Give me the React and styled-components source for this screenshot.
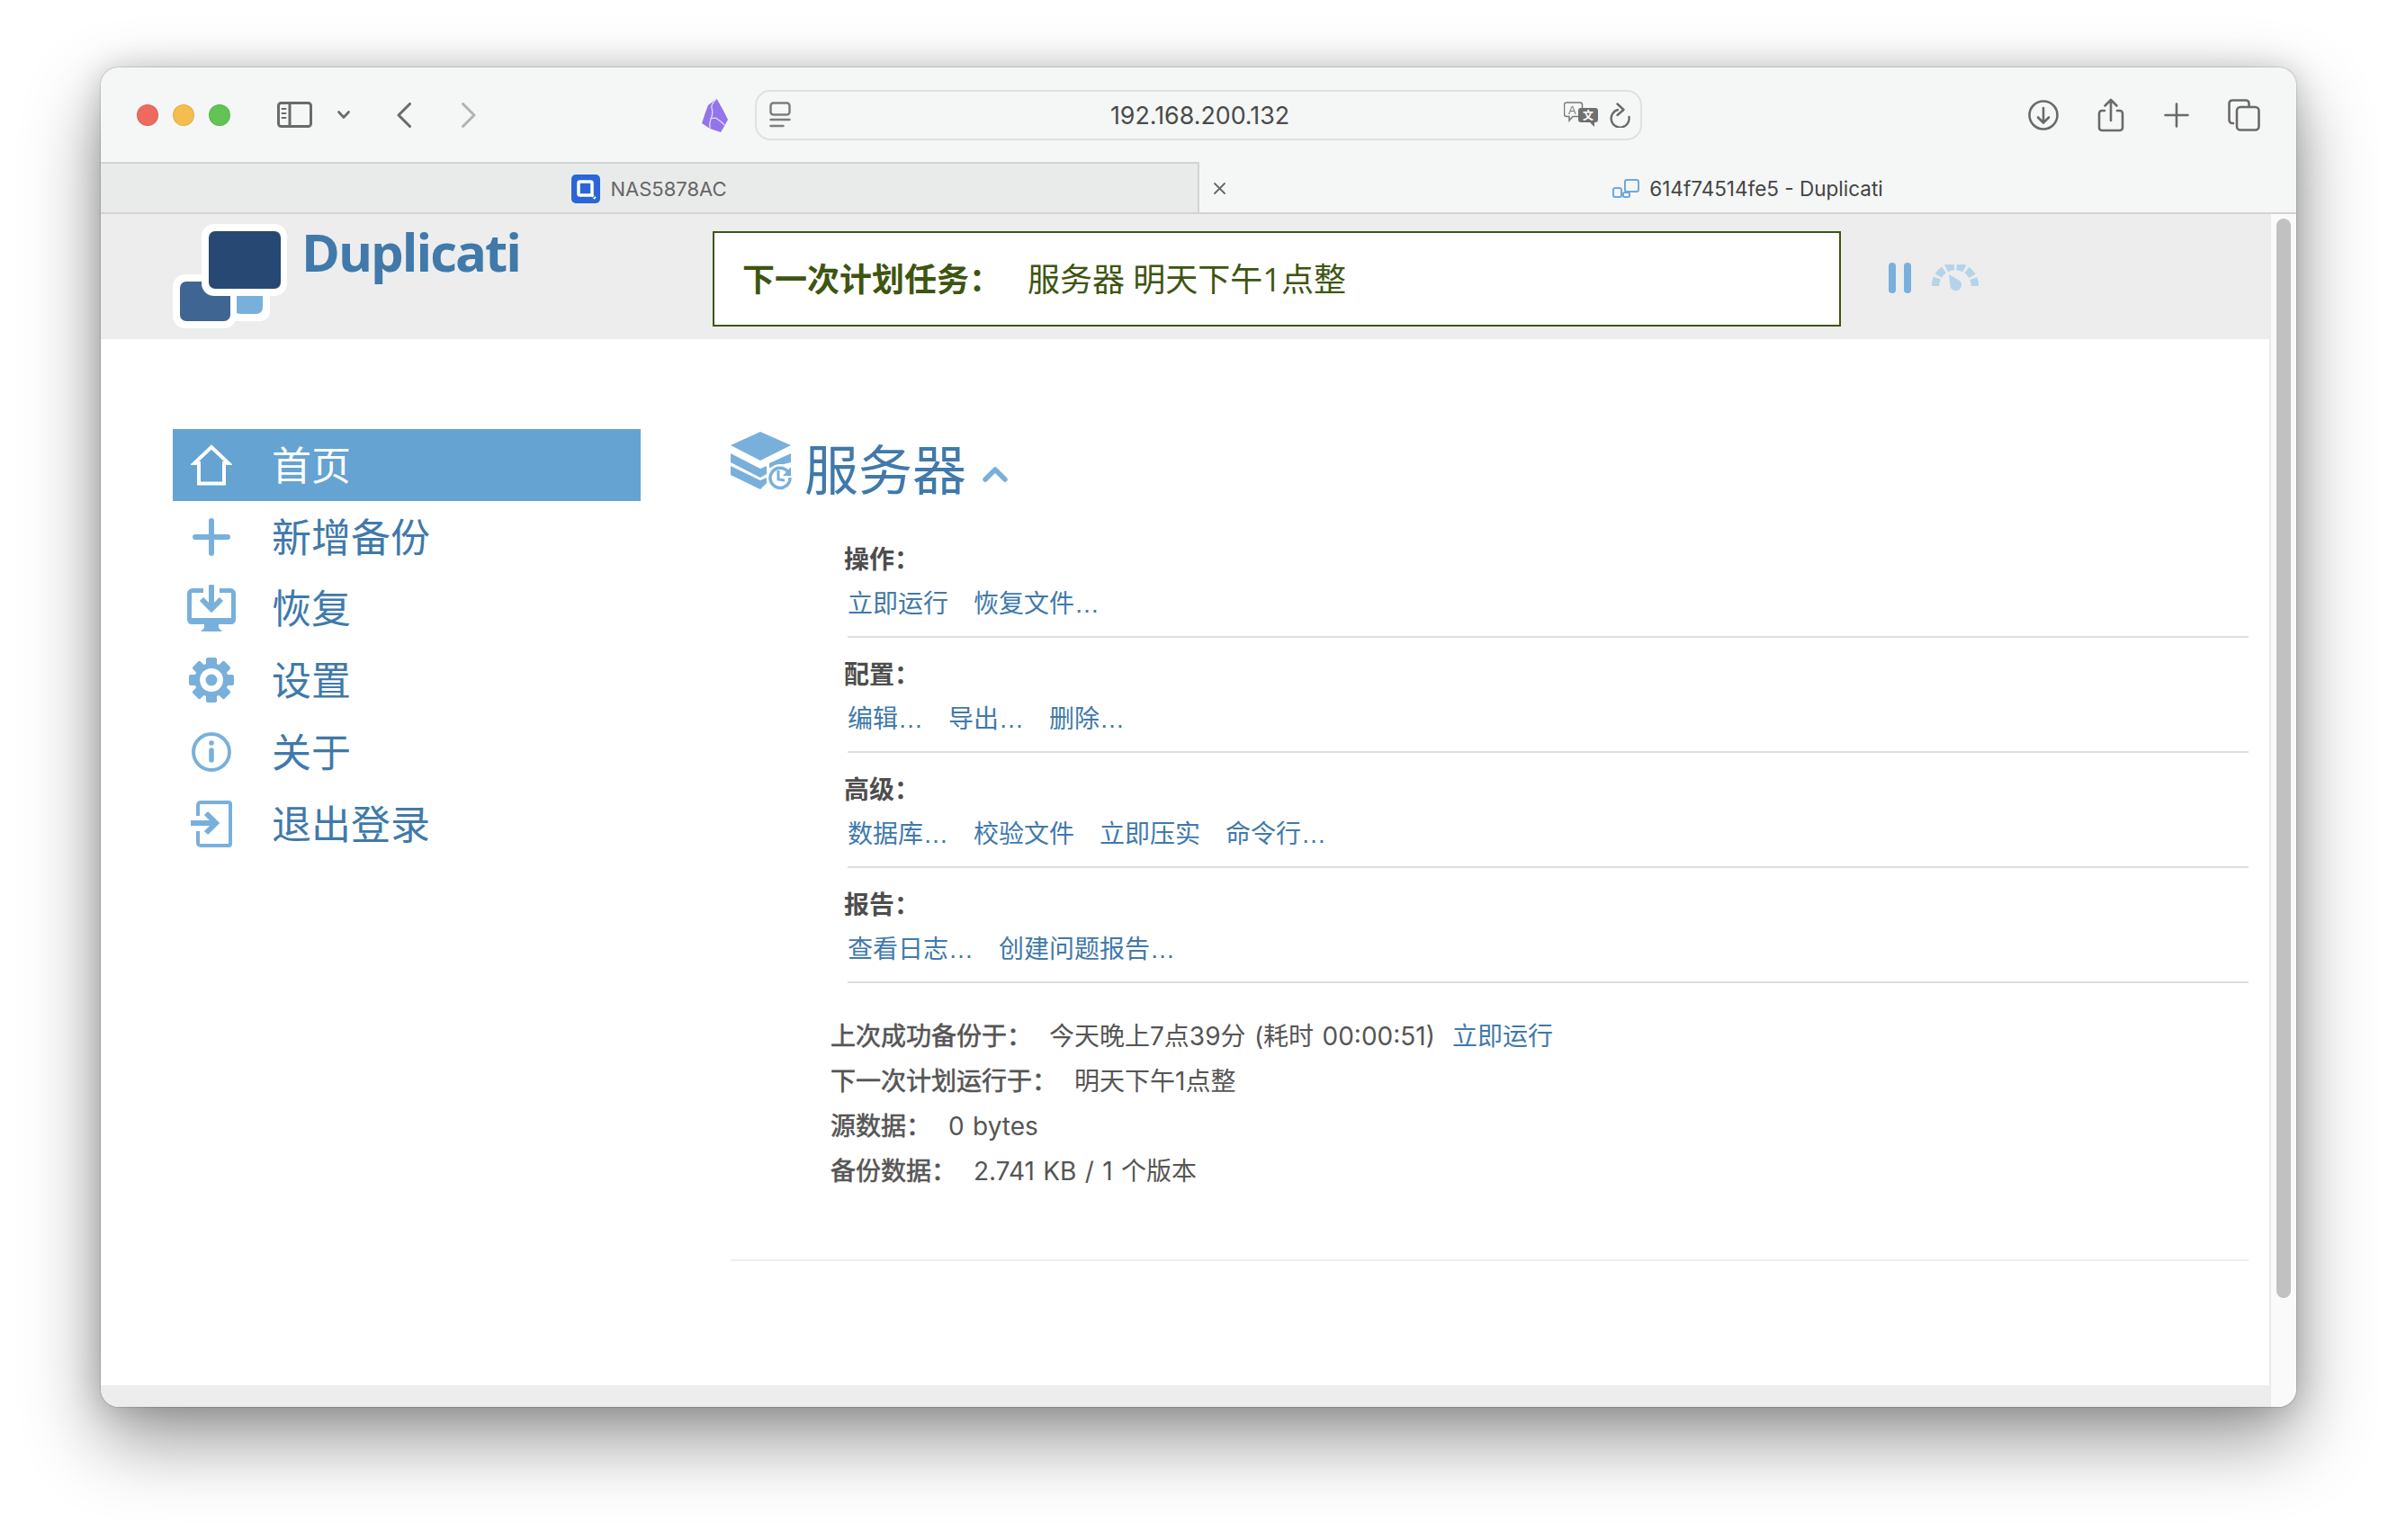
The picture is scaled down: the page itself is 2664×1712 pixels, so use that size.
import React from 'react';
import styled, { createGlobalStyle } from 'styled-components';

const FONT = `"Inter", "Noto Sans CJK SC", sans-serif`;

const GlobalStyle = createGlobalStyle`
    html, body {
        margin: 0;
        padding: 0;
        background: #fff;
    }
    svg {
        display: block;
    }
`;

const Page = styled.div`
    width: 2664px;
    height: 1712px;
    padding: 75px 112px 148px;
    box-sizing: border-box;
    overflow: hidden;
    font-family: ${FONT};
`;

const Win = styled.div`
    height: 100%;
    display: flex;
    flex-direction: column;
    border-radius: 20px;
    overflow: hidden;
    background: #fff;
    box-shadow: 0 0 1.5px rgba(0, 0, 0, 0.55), 0 0 34px rgba(0, 0, 0, 0.17), 0 36px 84px rgba(0, 0, 0, 0.42);
`;

const Toolbar = styled.div`
    height: 105px;
    flex: none;
    display: flex;
    align-items: center;
    padding-left: 40px;
    background: #f5f7f6;
`;

const Light = styled.span`
    width: 24px;
    height: 24px;
    border-radius: 50%;
    background: ${p => p.$color};
    box-shadow: inset 0 0 0 1px rgba(0, 0, 0, 0.08);
    margin-left: ${p => p.$gap || 0}px;
`;

const Slot = styled.span`
    flex: none;
    margin-left: ${p => p.$gap || 0}px;
`;

const UrlBar = styled.div`
    width: 986px;
    height: 56px;
    box-sizing: border-box;
    margin-left: 30px;
    padding: 0 11px 0 14px;
    display: flex;
    align-items: center;
    border: 2px solid #dfe1e0;
    border-radius: 17px;
`;

const UrlText = styled.div`
    flex: 1;
    padding-left: 50px;
    text-align: center;
    font-size: 26.8px;
    color: #4a4a4a;
`;

const TabBar = styled.div`
    height: 58px;
    flex: none;
    display: flex;
    background: #f5f7f6;
    border-bottom: 2px solid #d2d3d3;
    box-sizing: border-box;
`;

const Tab = styled.div`
    position: relative;
    flex: 1;
    display: flex;
    align-items: center;
    justify-content: center;
    gap: 11px;
    padding-top: 2px;
    box-sizing: border-box;
    font-size: ${p => (p.$active ? 22.5 : 22)}px;
    color: ${p => (p.$active ? '#444' : '#666')};
    background: ${p => (p.$active ? '#f5f7f6' : '#e9ebea')};
    ${p => !p.$active && `
        border-top: 2px solid #d2d3d3;
        border-right: 2px solid #d2d3d3;
    `}
`;

const TabClose = styled.span`
    position: absolute;
    left: 15px;
    top: 22px;
`;

const Body = styled.div`
    flex: 1;
    display: flex;
    min-height: 0;
`;

const Content = styled.div`
    flex: 1;
    display: flex;
    flex-direction: column;
    min-width: 0;
`;

const Track = styled.div`
    width: 30px;
    flex: none;
    box-sizing: border-box;
    padding: 5px 6px 0 6px;
    background: #fafafa;
    border-left: 2px solid #ececec;
`;

const Thumb = styled.div`
    width: 16px;
    height: 1200px;
    border-radius: 8px;
    background: #c1c1c1;
`;

const Header = styled.div`
    height: 139px;
    flex: none;
    display: flex;
    align-items: flex-start;
    background: #ededed;
`;

const Brand = styled.div`
    width: 600px;
    margin-left: 80px;
    padding-top: 11px;
    display: flex;
    gap: 15px;
`;

const BrandName = styled.div`
    font-family: "Open Sans", sans-serif;
    font-weight: 700;
    font-size: 58px;
    line-height: 58px;
    letter-spacing: -2px;
    margin-top: 2px;
    color: #4079aa;
`;

const Banner = styled.div`
    width: 1254px;
    height: 106px;
    margin-top: 19px;
    box-sizing: border-box;
    padding: 0 0 4px 31px;
    display: flex;
    align-items: center;
    background: #fff;
    border: 2px solid #3e5510;
    font-family: "Open Sans", "Noto Sans CJK SC", sans-serif;
    font-size: 36px;
    color: #3e5510;
`;

const BannerLabel = styled.span`
    font-weight: 700;
    margin-right: 29px;
`;

const HeaderIcons = styled.div`
    display: flex;
    align-items: center;
    margin: 54px 0 0 53px;
    gap: 23px;
`;

const Main = styled.div`
    flex: 1;
    display: flex;
    min-height: 0;
`;

const Side = styled.nav`
    width: 520px;
    margin: 100px 0 0 80px;
    flex: none;
`;

const SideRow = styled.div`
    height: 79.8px;
    display: flex;
    align-items: center;
    font-size: 44px;
    color: ${p => (p.$active ? '#fff' : '#4079aa')};
    background: ${p => (p.$active ? '#64a3d2' : 'transparent')};
`;

const SideIcon = styled.span`
    width: 86px;
    display: flex;
    justify-content: center;
    flex: none;
    margin-right: 24px;
`;

const SideLabel = styled.span`
    position: relative;
    top: -2px;
`;

const Column = styled.div`
    width: 1687px;
    margin-left: 100px;
    padding-top: 103px;
    flex: none;
`;

const Title = styled.div`
    display: flex;
    height: 63px;
    margin-bottom: 58px;
`;

const TitleText = styled.h1`
    margin: 10px 0 0 14px;
    font-weight: 400;
    font-size: 60px;
    line-height: 66px;
    color: #4079aa;
`;

const TitleChevron = styled.span`
    margin: 38px 0 0 18px;
`;

const Section = styled.section`
    margin-left: 130px;
    padding: 1px 0 15px;
    margin-bottom: 20px;
    border-bottom: 2px solid #ddd;
`;

const SectionLabel = styled.div`
    height: 40px;
    line-height: 40px;
    margin-left: -4px;
    font-size: 28px;
    font-weight: 700;
    color: #4d4d4d;
`;

const LinkRow = styled.div`
    display: flex;
    gap: 28px;
    margin-top: 10px;
    height: 40px;
    line-height: 40px;
`;

const Action = styled.a`
    font-family: "Liberation Sans", "Noto Sans CJK SC", sans-serif;
    font-size: 28px;
    color: #4079aa;
`;

const Stats = styled.div`
    margin: 34px 0 0 111px;
`;

const StatRow = styled.div`
    height: 50px;
    line-height: 50px;
    font-size: 28px;
    word-spacing: 1.5px;
    color: #555;
`;

const StatLabel = styled.span`
    -webkit-text-stroke: 0.6px #555;
    margin-right: 19px;
`;

const StatLink = styled.a`
    margin-left: 19px;
    color: #4079aa;
`;

const Closer = styled.hr`
    margin: 73px 0 0;
    border: 0;
    border-top: 2px solid #eee;
`;

const Footer = styled.div`
    height: 24px;
    flex: none;
    background: #ededed;
`;

const TOOL = '#6a6a6a';
const LIGHT = '#79b0db';

const Line = ({ w, h, children, color = TOOL, sw = 3 }) => (
    <svg width={w} height={h} viewBox={`0 0 ${w} ${h}`} fill="none" stroke={color} strokeWidth={sw} strokeLinecap="round" strokeLinejoin="round">
        {children}
    </svg>
);

const SidebarGlyph = () => (
    <Line w={39} h={29}>
        <rect x="1.5" y="1.5" width="36" height="26" rx="3" />
        <path d="M14 1.5v26" />
        <path d="M5.5 8h4M5.5 13h4M5.5 18h4" strokeWidth="2" />
    </Line>
);

const Obsidian = () => (
    <svg width="30" height="38" viewBox="0 0 30 38">
        <path d="M17.500 0.500 L25 14 L30 24 L25 33 L22 38 L10 34 L1 28 L5 16 L8 8 Z" fill="#9474ea" strokeLinejoin="round" />
        <path d="M17.500 0.500 Q11 7 12 11 Q14 17 11 23 Q9 29 10 34 M11 23 Q17 21 19 24 Q24 27 26 30" stroke="#e4dcfb" strokeWidth="1.300" fill="none" />
    </svg>
);

const ReaderGlyph = () => (
    <Line w={24} h={29} color="#7d7d7d" sw={2.500}>
        <rect x="1.500" y="1.500" width="21" height="13" rx="3" />
        <path d="M1.500 20h21M1.500 27h14" />
    </Line>
);

const TranslateGlyph = () => (
    <svg width="39" height="29" viewBox="0 0 39 29">
        <path d="M3 1h15a2.500 2.500 0 0 1 2.500 2.500v10.500a2.500 2.500 0 0 1-2.500 2.500H10l-4 4.500v-4.500H3a2.500 2.500 0 0 1-2.500-2.500V3.500A2.500 2.500 0 0 1 3 1z" fill="#f5f7f6" stroke="#777" strokeWidth="1.500" />
        <text x="5" y="13.500" fontFamily="Liberation Sans" fontSize="13" fill="#777">A</text>
        <path d="M19 7h16a3 3 0 0 1 3 3v10a3 3 0 0 1-3 3h-1v5l-5-5H19a3 3 0 0 1-3-3V10a3 3 0 0 1 3-3z" fill="#6f6f6f" />
        <text x="21" y="20" fontFamily="Noto Sans CJK SC" fontWeight="700" fontSize="12" fill="#fff">文</text>
    </svg>
);

const ReloadGlyph = () => (
    <Line w={23} h={28} sw={2.400}>
        <path d="M9 8A10 10 0 1 0 21.500 16" />
        <path d="M8.500 1.500l7 6.500-7 6" />
    </Line>
);

const DownloadGlyph = () => (
    <Line w={34} h={34} sw={2.600}>
        <circle cx="17" cy="17" r="15.500" />
        <path d="M17 9v16M11 19.500l6 6 6-6" />
    </Line>
);

const ShareGlyph = () => (
    <Line w={30} h={38} sw={2.600}>
        <path d="M8 14H5a3 3 0 0 0-3 3v16a3 3 0 0 0 3 3h20a3 3 0 0 0 3-3V17a3 3 0 0 0-3-3h-3" />
        <path d="M15 25V2M8.500 8.500L15 2l6.500 6.500" />
    </Line>
);

const PlusGlyph = () => (
    <Line w={28} h={28} sw={2.600}>
        <path d="M14 1.500v25M1.500 14h25" />
    </Line>
);

const TabsGlyph = () => (
    <Line w={36} h={36} sw={2.600}>
        <path d="M6 27H5a3.500 3.500 0 0 1-3.500-3.500V5A3.500 3.500 0 0 1 5 1.500h15A3.500 3.500 0 0 1 23.500 5v3" />
        <rect x="10" y="9" width="24.500" height="25.500" rx="4" />
    </Line>
);

const QnapIcon = () => (
    <svg width="32" height="32" viewBox="0 0 32 32">
        <rect width="32" height="32" rx="5" fill="#2a66d6" />
        <rect x="8" y="8" width="15" height="15" rx="1.500" fill="none" stroke="#fff" strokeWidth="3.500" />
        <path d="M21 21l6 6" stroke="#fff" strokeWidth="3" strokeDasharray="2 1" />
    </svg>
);

const DupTabIcon = () => (
    <Line w={30} h={21} color="#6fa9d8" sw={2}>
        <rect x="14" y="1" width="15" height="13" rx="2" />
        <rect x="1" y="10" width="9" height="10" rx="2" />
        <rect x="12" y="15" width="7" height="5" rx="1.500" />
    </Line>
);

const Logo = () => (
    <svg width="128" height="116" viewBox="0 0 128 116">
        <rect x="60" y="60" width="48" height="48" rx="10" fill="#fff" />
        <rect x="68" y="60" width="32" height="40" rx="7" fill="#79b0db" />
        <rect y="56" width="71" height="60" rx="14" fill="#fff" />
        <rect x="8" y="64" width="56" height="44" rx="7" fill="#3f6592" />
        <rect x="32" width="95" height="80" rx="14" fill="#fff" />
        <rect x="40" y="8" width="80" height="64" rx="7" fill="#274872" />
    </svg>
);

const PauseIcon = () => (
    <svg width="25" height="34" viewBox="0 0 25 34" fill={LIGHT}>
        <rect width="8" height="34" rx="4" />
        <rect x="17" width="8" height="34" rx="4" />
    </svg>
);

const GaugeIcon = () => (
    <svg width="52" height="30" viewBox="0 0 52 30">
        <path d="M4 24A22 22 0 0 1 48 24" fill="none" stroke="#b5d4ea" strokeWidth="8.500" strokeDasharray="9.100 2.900" />
        <path d="M19 11L31 18A6.500 6.500 0 1 1 20.500 25Z" fill="#b5d4ea" />
    </svg>
);

const HomeIcon = () => (
    <svg width="46" height="46" viewBox="0 0 46 46" fill="none" stroke="#fff" strokeWidth="4">
        <path d="M23 3L42 21H37V43.500H9V21H4Z" />
    </svg>
);

const AddIcon = () => (
    <svg width="42" height="42" viewBox="0 0 42 42" stroke={LIGHT} strokeWidth="6" strokeLinecap="round">
        <path d="M21 3v36M3 21h36" />
    </svg>
);

const RestoreIcon = () => (
    <svg width="54" height="52" viewBox="0 0 54 52" fill="none">
        <path d="M18 6.500H6a3.500 3.500 0 0 0-3.500 3.500v29a2 2 0 0 0 2 2h45a2 2 0 0 0 2-2V10A3.500 3.500 0 0 0 48 6.500H36" stroke={LIGHT} strokeWidth="5" />
        <path d="M1 37h52v3a4 4 0 0 1-4 4H5a4 4 0 0 1-4-4zM19 44h16v4l4 4H15l4-4z" fill={LIGHT} />
        <path d="M27 2v20" stroke={LIGHT} strokeWidth="6" strokeLinecap="round" />
        <path d="M16 16l11 11 11-11" stroke={LIGHT} strokeWidth="6" />
    </svg>
);

const GearIcon = () => (
    <svg width="50" height="50" viewBox="0 0 50 50">
        {[0, 45, 90, 135].map(a => (
            <rect key={a} x="19" y="0" width="12" height="50" rx="2" fill={LIGHT} transform={`rotate(${a} 25 25)`} />
        ))}
        <circle cx="25" cy="25" r="19" fill={LIGHT} />
        <circle cx="25" cy="25" r="13" fill="#fff" />
        <circle cx="25" cy="25" r="6.500" fill={LIGHT} />
    </svg>
);

const InfoIcon = () => (
    <svg width="44" height="44" viewBox="0 0 44 44" fill="none" stroke={LIGHT}>
        <circle cx="22" cy="22" r="20" strokeWidth="4" />
        <circle cx="22" cy="12" r="2.800" fill={LIGHT} stroke="none" />
        <path d="M22 20v11" strokeWidth="5.500" strokeLinecap="round" />
    </svg>
);

const LoginIcon = () => (
    <svg width="46" height="52" viewBox="0 0 46 52" fill="none">
        <path d="M8 17V5a3 3 0 0 1 3-3h31a2 2 0 0 1 2 2v44a2 2 0 0 1-2 2H11a3 3 0 0 1-3-3V34" stroke={LIGHT} strokeWidth="4" />
        <path d="M0 25h26" stroke={LIGHT} strokeWidth="6" />
        <path d="M17 14l11 11-11 11" stroke={LIGHT} strokeWidth="6" />
    </svg>
);

const ServerIcon = () => (
    <svg width="68" height="65" viewBox="0 0 68 65">
        <path d="M0 15L33 0l34 15-34 17z" fill={LIGHT} />
        <path d="M0 24l33 17 7-3v9l-7 4L0 34z" fill={LIGHT} />
        <path d="M0 38l33 16 7-3v6l-7 7L0 48z" fill={LIGHT} />
        <path d="M43 35l24-11v10l-24 6z" fill={LIGHT} />
        <circle cx="55" cy="51" r="15" fill="#fff" />
        <path d="M64 45A11 11 0 1 0 66 51" fill="none" stroke={LIGHT} strokeWidth="3.500" />
        <path d="M67 39v10h-9z" fill={LIGHT} />
        <path d="M53 43v10l7 1" fill="none" stroke={LIGHT} strokeWidth="3" />
    </svg>
);

const sideItems = [
    { label: '首页', icon: <HomeIcon />, active: true },
    { label: '新增备份', icon: <AddIcon /> },
    { label: '恢复', icon: <RestoreIcon /> },
    { label: '设置', icon: <GearIcon /> },
    { label: '关于', icon: <InfoIcon /> },
    { label: '退出登录', icon: <LoginIcon /> },
];

const sections = [
    { label: '操作：', links: ['立即运行', '恢复文件…'] },
    { label: '配置：', links: ['编辑…', '导出…', '删除…'] },
    { label: '高级：', links: ['数据库…', '校验文件', '立即压实', '命令行…'] },
    { label: '报告：', links: ['查看日志…', '创建问题报告…'] },
];

const App = () => (
    <Page>
        <GlobalStyle />
        <Win>
            <Toolbar>
                <Light $color="#ee6a5f" />
                <Light $color="#f5bd4f" $gap={16} />
                <Light $color="#61c454" $gap={16} />
                <Slot $gap={52}><SidebarGlyph /></Slot>
                <Slot $gap={28}><Line w={14} h={9} sw={2.600}><path d="M1.500 1.500L7 7.500l5.500-6" /></Line></Slot>
                <Slot $gap={52}><Line w={16} h={28}><path d="M14.500 1.500L2 14l12.500 12.500" /></Line></Slot>
                <Slot $gap={56}><Line w={16} h={28} color="#b3b3b3"><path d="M1.500 1.500L14 14 1.500 26.500" /></Line></Slot>
                <Slot $gap={250}><Obsidian /></Slot>
                <UrlBar>
                    <ReaderGlyph />
                    <UrlText>192.168.200.132</UrlText>
                    <TranslateGlyph />
                    <Slot $gap={12}><ReloadGlyph /></Slot>
                </UrlBar>
                <Slot $gap={429}><DownloadGlyph /></Slot>
                <Slot $gap={43}><ShareGlyph /></Slot>
                <Slot $gap={44}><PlusGlyph /></Slot>
                <Slot $gap={43}><TabsGlyph /></Slot>
            </Toolbar>
            <TabBar>
                <Tab>
                    <QnapIcon />
                    NAS5878AC
                </Tab>
                <Tab $active>
                    <TabClose>
                        <Line w={15} h={15} color="#666" sw={1.800}><path d="M2 2l11 11M13 2L2 13" /></Line>
                    </TabClose>
                    <DupTabIcon />
                    614f74514fe5 - Duplicati
                </Tab>
            </TabBar>
            <Body>
                <Content>
                    <Header>
                        <Brand>
                            <Logo />
                            <BrandName>Duplicati</BrandName>
                        </Brand>
                        <Banner>
                            <BannerLabel>下一次计划任务：</BannerLabel>
                            服务器 明天下午1点整
                        </Banner>
                        <HeaderIcons>
                            <PauseIcon />
                            <GaugeIcon />
                        </HeaderIcons>
                    </Header>
                    <Main>
                        <Side>
                            {sideItems.map(item => (
                                <SideRow key={item.label} $active={item.active}>
                                    <SideIcon>{item.icon}</SideIcon>
                                    <SideLabel>{item.label}</SideLabel>
                                </SideRow>
                            ))}
                        </Side>
                        <Column>
                            <Title>
                                <ServerIcon />
                                <TitleText>服务器</TitleText>
                                <TitleChevron>
                                    <Line w={28} h={18} color={LIGHT} sw={5.500}><path d="M3 15L14 4l11 11" /></Line>
                                </TitleChevron>
                            </Title>
                            {sections.map(section => (
                                <Section key={section.label}>
                                    <SectionLabel>{section.label}</SectionLabel>
                                    <LinkRow>
                                        {section.links.map(link => <Action key={link}>{link}</Action>)}
                                    </LinkRow>
                                </Section>
                            ))}
                            <Stats>
                                <StatRow>
                                    <StatLabel>上次成功备份于：</StatLabel>
                                    今天晚上7点39分 (耗时 00:00:51)
                                    <StatLink>立即运行</StatLink>
                                </StatRow>
                                <StatRow>
                                    <StatLabel>下一次计划运行于：</StatLabel>
                                    明天下午1点整
                                </StatRow>
                                <StatRow>
                                    <StatLabel>源数据：</StatLabel>
                                    0 bytes
                                </StatRow>
                                <StatRow>
                                    <StatLabel>备份数据：</StatLabel>
                                    2.741 KB / 1 个版本
                                </StatRow>
                            </Stats>
                            <Closer />
                        </Column>
                    </Main>
                    <Footer />
                </Content>
                <Track>
                    <Thumb />
                </Track>
            </Body>
        </Win>
    </Page>
);

export default App;
